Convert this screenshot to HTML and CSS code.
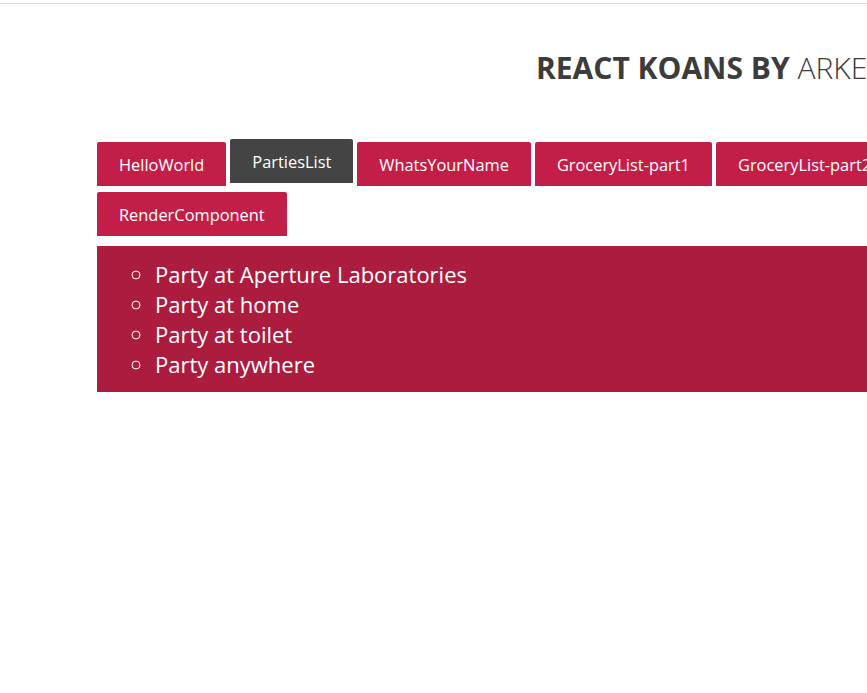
FILE: index.html
```html
<!DOCTYPE html>
<html>
<head>
<meta charset="utf-8">
<link rel="stylesheet" href="styles.css">
</head>
<body>
<div class="page">
  <header class="header">
    <h1 class="title"><span class="title-bold">REACT KOANS BY</span> <span class="title-light">ARKENCY</span></h1>
  </header>
  <main class="main">
    <nav class="tabs">
      <button class="tab">HelloWorld</button>
      <button class="tab tab-active">PartiesList</button>
      <button class="tab">WhatsYourName</button>
      <button class="tab">GroceryList-part1</button>
      <button class="tab">GroceryList-part2</button>
      <button class="tab">RenderComponent</button>
    </nav>
    <section class="panel">
      <ul class="parties">
        <li>Party at Aperture Laboratories</li>
        <li>Party at home</li>
        <li>Party at toilet</li>
        <li>Party anywhere</li>
      </ul>
    </section>
  </main>
</div>
</body>
</html>
```
FILE: styles.css
```css
html, body {
  margin: 0;
  padding: 0;
  overflow: hidden;
  background: #fff;
}
body {
  font-family: "Open Sans", "DejaVu Sans", sans-serif;
  border-top: 1px solid #dcdcdc;
  margin-top: 3px;
}
.page {
  width: 1200px;
}
.header {
  padding-top: 44px;
  height: 94px;
  padding-left: 536px;
}
.title {
  margin: 0;
  font-size: 30px;
  line-height: 40px;
  color: #3c3c3c;
  font-stretch: 89%;
  white-space: nowrap;
}
.title-bold { font-weight: 700; }
.title-light { font-weight: 300; }
.main {
  padding-left: 97px;
}
.tabs {
  display: flex;
  flex-wrap: wrap;
  width: 900px;
  column-gap: 4px;
  row-gap: 6px;
  align-items: flex-start;
}
.tab {
  font-family: "Open Sans", "DejaVu Sans", sans-serif;
  font-size: 16.4px;
  color: #fff;
  background: #c31e47;
  border: none;
  border-radius: 2px 2px 0 0;
  height: 44px;
  padding: 0 22px;
  cursor: pointer;
  white-space: nowrap;
}
.tab-active {
  background: #444444;
  margin-top: -3px;
}
.panel {
  background: #ab1c3f;
  margin-top: 10px;
  padding: 13px 0 13px;
  color: #fff;
}
.parties {
  margin: 0;
  padding-left: 58px;
  list-style: circle;
  font-size: 22px;
  line-height: 30px;
}
```
